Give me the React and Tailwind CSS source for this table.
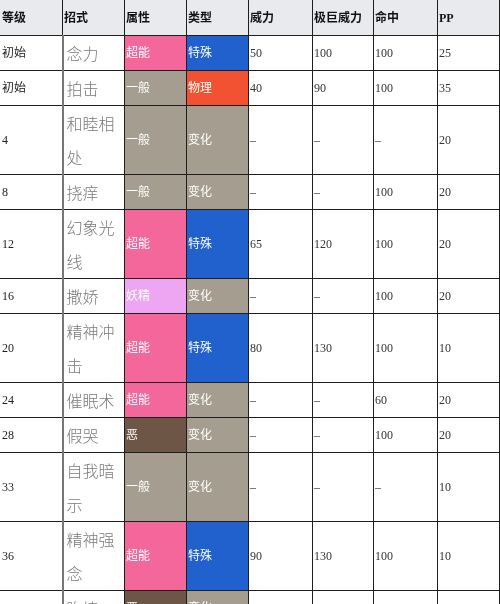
const TYPE_STYLE = {
  超能: "bg-[#f4679a]",
  一般: "bg-[#a59d8f]",
  妖精: "bg-[#eea6f2]",
  恶: "bg-[#6d5646]",
};

const CAT_STYLE = {
  特殊: "bg-[#2061cd]",
  物理: "bg-[#f25231]",
  变化: "bg-[#a59d8f]",
};

const moves = [
  ["初始", "念力", "超能", "特殊", "50", "100", "100", "25"],
  ["初始", "拍击", "一般", "物理", "40", "90", "100", "35"],
  ["4", "和睦相处", "一般", "变化", "–", "–", "–", "20"],
  ["8", "挠痒", "一般", "变化", "–", "–", "100", "20"],
  ["12", "幻象光线", "超能", "特殊", "65", "120", "100", "20"],
  ["16", "撒娇", "妖精", "变化", "–", "–", "100", "20"],
  ["20", "精神冲击", "超能", "特殊", "80", "130", "100", "10"],
  ["24", "催眠术", "超能", "变化", "–", "–", "60", "20"],
  ["28", "假哭", "恶", "变化", "–", "–", "100", "20"],
  ["33", "自我暗示", "一般", "变化", "–", "–", "–", "10"],
  ["36", "精神强念", "超能", "特殊", "90", "130", "100", "10"],
  ["40", "吹捧", "恶", "变化", "–", "–", "100", "15"],
];

const headers = ["等级", "招式", "属性", "类型", "威力", "极巨威力", "命中", "PP"];
const widths = ["w-[64px]", "w-[62px]", "w-[62px]", "w-[62px]", "w-[64px]", "w-[61px]", "w-[64px]", "w-[62px]"];

const cell = "border border-[#1e1e1e] px-[1px] align-middle text-left";

export default function App() {
  return (
    <div className="h-[604px] w-[500px] overflow-hidden bg-white font-['Liberation_Serif','Noto_Sans_CJK_SC',serif] text-[12px] text-[#333] antialiased">
      <table className="-ml-[2px] -mt-[1px] w-[501px] table-fixed border-collapse will-change-transform">
        <colgroup>
          {widths.map((w, i) => (
            <col key={i} className={w} />
          ))}
        </colgroup>
        <thead>
          <tr className="h-[36px] bg-[#e9eaee]">
            {headers.map((h, i) => (
              <th key={h} className={`${cell} ${i === 0 ? "pl-[3px]" : ""} font-bold text-[#111]`}>
                {h}
              </th>
            ))}
          </tr>
        </thead>
        <tbody>
          {moves.map(([lvl, name, type, cat, pow, max, acc, pp]) => (
            <tr key={lvl + name}>
              <td className={`${cell} pl-[3px] text-[#222]`}>{lvl}</td>
              <td className={`${cell} border-l-2 border-l-[#777] px-0 py-0`}>
                <div className="pl-[2px] font-['Noto_Sans_CJK_SC',sans-serif] text-[16px] font-light leading-[34px] text-[#7a7a7a]">
                  {name}
                </div>
              </td>
              <td className={`${cell} ${TYPE_STYLE[type]} text-white`}>{type}</td>
              <td className={`${cell} ${CAT_STYLE[cat]} text-white`}>{cat}</td>
              <td className={cell}>{pow}</td>
              <td className={cell}>{max}</td>
              <td className={cell}>{acc}</td>
              <td className={cell}>{pp}</td>
            </tr>
          ))}
        </tbody>
      </table>
    </div>
  );
}
